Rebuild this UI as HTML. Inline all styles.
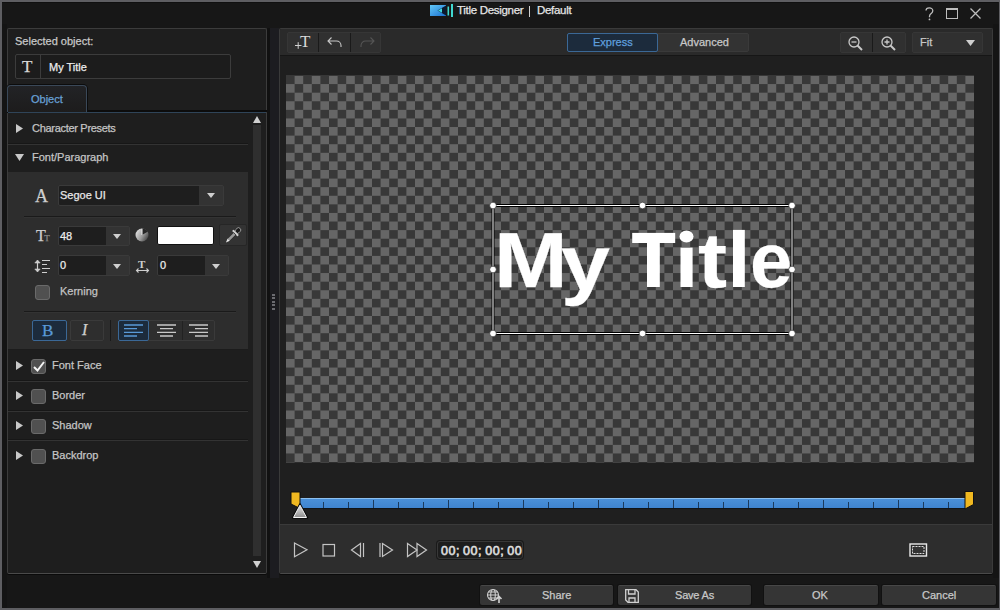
<!DOCTYPE html>
<html><head><meta charset="utf-8">
<style>
*{box-sizing:border-box;margin:0;padding:0}
html,body{width:1000px;height:610px;overflow:hidden}
body{position:relative;background:#171717;font-family:"Liberation Sans",sans-serif;font-size:11px;color:#c4c4c4}
.a{position:absolute}
.t{position:absolute;white-space:nowrap;line-height:1;-webkit-text-stroke:0.25px currentColor}
svg{position:absolute;overflow:visible}
</style></head><body>
<!-- window border -->
<div class="a" style="left:0;top:0;width:1000px;height:610px;border:2px solid #5e5e62;border-right-width:1px"></div>
<div class="a" style="left:2px;top:2px;width:996px;height:1px;background:#101010"></div>
<div class="a" style="left:993px;top:24px;width:6px;height:554px;background:#141414"></div>

<!-- title bar -->
<svg style="left:430px;top:4px" width="24" height="14">
  <defs><linearGradient id="lg" x1="0" y1="0" x2="1" y2="1"><stop offset="0" stop-color="#62c8f8"/><stop offset="1" stop-color="#1a70d0"/></linearGradient></defs>
  <rect x="0" y="1" width="16" height="11" fill="url(#lg)"/>
  <polygon points="16,1.5 7.5,6.5 16,11.5" fill="#0a1a30"/>
  <polygon points="12,4.2 8,6.5 12,8.8" fill="#40d8e0"/>
  <rect x="17.5" y="2.5" width="1.6" height="9" fill="#40d8d0"/>
  <rect x="21" y="0" width="2" height="13" fill="#40d8d0"/>
</svg>
<div class="t" style="left:457px;top:5px;font-size:11.5px;letter-spacing:-0.3px;color:#e6e6e6">Title Designer</div><div class="a" style="left:529px;top:6px;width:1px;height:11px;background:#d0d0d0"></div><div class="t" style="left:537px;top:5px;font-size:11.5px;letter-spacing:-0.3px;color:#e6e6e6">Default</div>
<svg style="left:925px;top:7px" width="10" height="14"><path d="M1 3.5C1 1.8 2.6 0.8 4.3 0.8C6.3 0.8 7.8 2 7.8 3.8C7.8 5.3 6.8 6 5.8 6.8C4.9 7.5 4.5 8 4.5 9.5V10.3" stroke="#bdbdbd" stroke-width="1.3" fill="none"/><circle cx="4.5" cy="12.4" r="0.9" fill="#bdbdbd"/></svg>
<div class="a" style="left:946px;top:8px;width:12px;height:11px;border:1.5px solid #bdbdbd;border-top-width:2px"></div>
<svg style="left:970px;top:8px" width="11" height="11"><path d="M0.5 0.5L10.5 10.5M10.5 0.5L0.5 10.5" stroke="#bdbdbd" stroke-width="1.3"/></svg>

<!-- LEFT PANEL -->
<div class="a" style="left:7px;top:28px;width:260px;height:546px;background:#1e1e1e;border:1px solid #3c3c3c;border-radius:2px;border-bottom-color:#4a4a4a;box-shadow:0 1px 0 #0a0a0a"></div>

<div class="t" style="left:15px;top:36px;color:#c8c8c8">Selected object:</div>
<div class="a" style="left:15px;top:54px;width:216px;height:25px;border:1px solid #3c3c3c;border-radius:2px;background:#1c1c1c"></div>
<div class="a" style="left:40px;top:55px;width:1px;height:23px;background:#3c3c3c"></div>
<div class="t" style="left:22px;top:58px;font-family:'Liberation Serif',serif;font-size:17px;color:#d8d8d8">T</div>
<div class="t" style="left:49px;top:62px;color:#ececec">My Title</div>
<!-- tab -->
<div class="a" style="left:7px;top:85px;width:80px;height:27px;border:1px solid #3a4858;border-bottom:none;border-radius:4px 4px 0 0;background:linear-gradient(#222326,#1d1c1c);box-shadow:0 0 0 1px #0c0c0c"></div>
<div class="t" style="left:31px;top:94px;font-size:11px;color:#68a0d6">Object</div>
<div class="a" style="left:87px;top:110px;width:180px;height:2px;background:#0c0c0c"></div>
<div class="a" style="left:8px;top:112px;width:258px;height:1px;background:#2f4458"></div>
<!-- rows -->
<div class="a" style="left:8px;top:143px;width:240px;height:1px;background:#171717"></div><div class="a" style="left:8px;top:144px;width:240px;height:1px;background:#333"></div>
<svg style="left:16px;top:124px" width="7" height="9"><polygon points="0,0 7,4.5 0,9" fill="#c8c8c8"/></svg>
<div class="t" style="left:32px;top:123px;color:#c4c4c4;letter-spacing:-0.3px">Character Presets</div>
<svg style="left:15px;top:154px" width="9" height="7"><polygon points="0,0 9,0 4.5,7" fill="#c8c8c8"/></svg>
<div class="t" style="left:32px;top:152px;color:#c4c4c4">Font/Paragraph</div>
<!-- section -->
<div class="a" style="left:8px;top:172px;width:240px;height:178px;background:#2d2d2d"></div>
<div class="a" style="left:8px;top:349px;width:240px;height:1px;background:#1c1c1c"></div>
<div class="t" style="left:35px;top:187px;font-family:'Liberation Serif',serif;font-size:18px;color:#cfcfcf">A</div>
<div class="a" style="left:58px;top:185px;width:166px;height:21px;border:1px solid #3a3a3a;border-radius:2px;background:#1e1e1e"></div>
<div class="a" style="left:199px;top:186px;width:24px;height:19px;background:#333"></div>
<svg style="left:207px;top:193px" width="8" height="5"><polygon points="0,0 8,0 4,5" fill="#cfcfcf"/></svg>
<div class="t" style="left:60px;top:190px;color:#e6e6e6">Segoe UI</div>
<div class="a" style="left:24px;top:216px;width:212px;height:1px;background:#1a1a1a"></div>
<div class="a" style="left:24px;top:217px;width:212px;height:1px;background:#333"></div>

<div class="t" style="left:36px;top:228px;font-family:'Liberation Serif',serif;font-size:16px;color:#cfcfcf">T<span style="font-size:9px;color:#8c8c8c;margin-left:-1.5px">T</span></div>
<div class="a" style="left:58px;top:226px;width:72px;height:20px;border:1px solid #3a3a3a;border-radius:2px;background:#1e1e1e"></div>
<div class="a" style="left:106px;top:227px;width:23px;height:18px;background:#333"></div>
<svg style="left:113px;top:234px" width="8" height="5"><polygon points="0,0 8,0 4,5" fill="#cfcfcf"/></svg>
<div class="t" style="left:60px;top:231px;color:#ececec">48</div>
<svg style="left:135px;top:228px" width="14" height="14"><defs><linearGradient id="og" x1="0" y1="0.2" x2="1" y2="0.8"><stop offset="0" stop-color="#e6e6e6"/><stop offset="0.55" stop-color="#9a9a9a"/><stop offset="1" stop-color="#3c3c3c"/></linearGradient></defs><circle cx="7" cy="7" r="6.5" fill="url(#og)"/><path d="M7 7V0.5A6.5 6.5 0 0 1 12.6 3.75Z" fill="#262626"/><path d="M7 7V0.8" stroke="#f0f0f0" stroke-width="1"/></svg>
<div class="a" style="left:157px;top:226px;width:57px;height:19px;border:1px solid #111;border-radius:2px;background:#fff"></div>
<div class="a" style="left:219px;top:224px;width:28px;height:22px;border:1px solid #262626;border-radius:2px;background:#333"></div>
<svg style="left:224px;top:226px" width="18" height="19"><g transform="rotate(45 9 9.5)">
<rect x="6.8" y="-0.5" width="4.4" height="6" rx="2" fill="#1a1a1a" stroke="#b0b0b0" stroke-width="0.8"/>
<rect x="5.2" y="5" width="7.6" height="2" rx="0.6" fill="#d0d0d0"/>
<rect x="7.4" y="7" width="3.2" height="8.5" fill="#9a9a9a" stroke="#1a1a1a" stroke-width="0.6"/>
<polygon points="7.4,15.5 10.6,15.5 9,19.5" fill="#e8e8e8"/>
</g></svg>

<svg style="left:34px;top:259px" width="17" height="15"><path d="M3.5 1.5V12.5" stroke="#cfcfcf" stroke-width="1.2"/><path d="M0.8 4L3.5 1L6.2 4Z M0.8 10L3.5 13L6.2 10Z" fill="#cfcfcf" stroke="#cfcfcf" stroke-width="0.6"/><path d="M8 1.5H16M8 5.5H13M8 9.5H16M8 13.5H13" stroke="#cfcfcf" stroke-width="1.1"/></svg>
<div class="a" style="left:58px;top:255px;width:72px;height:21px;border:1px solid #3a3a3a;border-radius:2px;background:#1e1e1e"></div>
<div class="a" style="left:106px;top:256px;width:23px;height:19px;background:#333"></div>
<svg style="left:113px;top:264px" width="8" height="5"><polygon points="0,0 8,0 4,5" fill="#cfcfcf"/></svg>
<div class="t" style="left:60px;top:260px;color:#ececec">0</div>
<svg style="left:135px;top:259px" width="15" height="14"><text x="3" y="9" font-family="Liberation Serif" font-weight="bold" font-size="11" fill="#cfcfcf">T</text><path d="M1.5 11.5H13.5M3.5 9.5L1.5 11.5L3.5 13.5M11.5 9.5L13.5 11.5L11.5 13.5" stroke="#cfcfcf" stroke-width="1.1" fill="none"/></svg>
<div class="a" style="left:157px;top:255px;width:72px;height:21px;border:1px solid #3a3a3a;border-radius:2px;background:#1e1e1e"></div>
<div class="a" style="left:205px;top:256px;width:23px;height:19px;background:#333"></div>
<svg style="left:212px;top:264px" width="8" height="5"><polygon points="0,0 8,0 4,5" fill="#cfcfcf"/></svg>
<div class="t" style="left:160px;top:260px;color:#ececec">0</div>

<div class="a" style="left:35px;top:285px;width:15px;height:15px;border:1px solid #6a6a6a;border-radius:3px;background:#505050"></div>
<div class="t" style="left:60px;top:286px;color:#c4c4c4">Kerning</div>
<div class="a" style="left:24px;top:311px;width:212px;height:1px;background:#1a1a1a"></div>
<div class="a" style="left:24px;top:312px;width:212px;height:1px;background:#333"></div>

<div class="a" style="left:32px;top:320px;width:35px;height:21px;border:1px solid #3b6896;border-radius:2px;background:#1c2b3c"></div>
<div class="t" style="left:42px;top:322px;font-family:'Liberation Serif',serif;font-size:17px;color:#5a9ad8">B</div>
<div class="a" style="left:70px;top:320px;width:34px;height:21px;border:1px solid #3a3a3a;border-radius:2px;background:#2e2e2e"></div>
<div class="t" style="left:82px;top:322px;font-family:'Liberation Serif',serif;font-style:italic;font-size:16px;color:#cfcfcf">I</div>
<div class="a" style="left:110px;top:320px;width:1px;height:21px;background:#1a1a1a"></div>
<div class="a" style="left:118px;top:320px;width:97px;height:21px;border:1px solid #3a3a3a;border-radius:2px;background:#2e2e2e"></div>
<div class="a" style="left:118px;top:320px;width:31px;height:21px;border:1px solid #3b6896;border-radius:2px;background:#1c2b3c"></div>
<div class="a" style="left:182px;top:321px;width:1px;height:19px;background:#222"></div>
<svg style="left:124px;top:324px" width="90" height="13">
 <path d="M0 1H19M0 4.7H13M0 8.3H19M0 12H13" stroke="#5a9ad8" stroke-width="1.3"/>
 <path d="M33 1H52M36 4.7H49M33 8.3H52M36 12H49" stroke="#c8c8c8" stroke-width="1.3"/>
 <path d="M65 1H84M71 4.7H84M65 8.3H84M71 12H84" stroke="#c8c8c8" stroke-width="1.3"/>
</svg>

<!-- lower rows -->
<div class="a" style="left:8px;top:380px;width:240px;height:1px;background:#171717"></div><div class="a" style="left:8px;top:381px;width:240px;height:1px;background:#333"></div>
<div class="a" style="left:8px;top:410px;width:240px;height:1px;background:#171717"></div><div class="a" style="left:8px;top:411px;width:240px;height:1px;background:#333"></div>
<div class="a" style="left:8px;top:439px;width:240px;height:1px;background:#171717"></div><div class="a" style="left:8px;top:440px;width:240px;height:1px;background:#333"></div>
<svg style="left:16px;top:361px" width="7" height="9"><polygon points="0,0 7,4.5 0,9" fill="#c8c8c8"/></svg>
<div class="a" style="left:31px;top:359px;width:15px;height:15px;border:1px solid #6a6a6a;border-radius:3px;background:#505050"></div>
<svg style="left:33px;top:361px" width="12" height="11"><path d="M1 6L4.5 9.5L11 1" stroke="#f4f4f4" stroke-width="2" fill="none"/></svg>
<div class="t" style="left:52px;top:360px;color:#c4c4c4">Font Face</div>
<svg style="left:16px;top:391px" width="7" height="9"><polygon points="0,0 7,4.5 0,9" fill="#c8c8c8"/></svg>
<div class="a" style="left:31px;top:389px;width:15px;height:15px;border:1px solid #6a6a6a;border-radius:3px;background:#505050"></div>
<div class="t" style="left:52px;top:390px;color:#c4c4c4">Border</div>
<svg style="left:16px;top:421px" width="7" height="9"><polygon points="0,0 7,4.5 0,9" fill="#c8c8c8"/></svg>
<div class="a" style="left:31px;top:419px;width:15px;height:15px;border:1px solid #6a6a6a;border-radius:3px;background:#505050"></div>
<div class="t" style="left:52px;top:420px;color:#c4c4c4">Shadow</div>
<svg style="left:16px;top:451px" width="7" height="9"><polygon points="0,0 7,4.5 0,9" fill="#c8c8c8"/></svg>
<div class="a" style="left:31px;top:449px;width:15px;height:15px;border:1px solid #6a6a6a;border-radius:3px;background:#505050"></div>
<div class="t" style="left:52px;top:450px;color:#c4c4c4">Backdrop</div>

<!-- scrollbar -->
<svg style="left:253px;top:116px" width="8" height="7"><polygon points="4,0 8,7 0,7" fill="#d0d0d0"/></svg>
<div class="a" style="left:253px;top:125px;width:8px;height:431px;background:#2f2f2f"></div>
<svg style="left:253px;top:561px" width="8" height="7"><polygon points="0,0 8,0 4,7" fill="#d0d0d0"/></svg>
<!-- splitter -->
<div class="a" style="left:267px;top:28px;width:3px;height:550px;background:#111"></div>
<div class="a" style="left:2px;top:24px;width:5px;height:584px;background:#141414"></div>
<div class="a" style="left:270px;top:28px;width:9px;height:550px;background:#1c1c20"></div>
<div class="a" style="left:272px;top:294px;width:3px;height:17px;background:repeating-linear-gradient(#6b6b70 0 2px,transparent 2px 3.5px)"></div>

<!-- RIGHT PANEL -->
<div class="a" style="left:279px;top:28px;width:714px;height:546px;background:#1f1f1f;border:1px solid #3a3a3a;border-radius:2px;overflow:hidden;border-bottom-color:#4a4a4a;box-shadow:0 1px 0 #0a0a0a">
  <div class="a" style="left:0;top:0;width:712px;height:27px;background:#2a2a2a;border-bottom:1px solid #161616"></div>
  <div class="a" style="left:0;top:495px;width:712px;height:50px;background:#2d2d2d;border-top:1px solid #3a3a3a"></div>
</div>
<!-- toolbar buttons -->
<div class="a" style="left:287px;top:32px;width:94px;height:21px;border:1px solid #363636;border-radius:2px;background:#303030"></div>
<div class="a" style="left:318px;top:33px;width:1px;height:19px;background:#1a1a1a"></div>
<div class="a" style="left:350px;top:33px;width:1px;height:19px;background:#1a1a1a"></div>
<svg style="left:294px;top:35px" width="20" height="15"><path d="M1 10.5H7.5M4.2 7.2V13.8" stroke="#d0d0d0" stroke-width="1"/><text x="6" y="12" font-family="Liberation Serif" font-size="17" fill="#d8d8d8">T</text></svg>
<svg style="left:327px;top:37px" width="16" height="11"><path d="M1 4H9.5A4.5 4.5 0 0 1 14 8.5V10M4.5 0.5L1 4L4.5 7.5" stroke="#c8c8c8" stroke-width="1.1" fill="none"/></svg>
<svg style="left:359px;top:37px" width="16" height="11"><path d="M15 4H6.5A4.5 4.5 0 0 0 2 8.5V10M11.5 0.5L15 4L11.5 7.5" stroke="#555" stroke-width="1.1" fill="none"/></svg>

<div class="a" style="left:567px;top:33px;width:182px;height:19px;border:1px solid #3a3a3a;border-radius:2px;background:#333"></div>
<div class="a" style="left:567px;top:33px;width:91px;height:19px;border:1px solid #3b6896;border-radius:2px;background:#1c2b3c"></div>
<div class="t" style="left:593px;top:37px;color:#5f9fdc">Express</div>
<div class="t" style="left:680px;top:37px;color:#c8c8c8">Advanced</div>

<div class="a" style="left:840px;top:32px;width:66px;height:21px;border:1px solid #363636;border-radius:2px;background:#303030"></div>
<div class="a" style="left:872px;top:33px;width:1px;height:19px;background:#1a1a1a"></div>
<svg style="left:848px;top:36px" width="18" height="15"><circle cx="6" cy="6" r="5" stroke="#c8c8c8" stroke-width="1.3" fill="none"/><path d="M3.5 6H8.5" stroke="#c8c8c8" stroke-width="1.3"/><path d="M9.5 9.5L14 14" stroke="#c8c8c8" stroke-width="2"/></svg>
<svg style="left:881px;top:36px" width="18" height="15"><circle cx="6" cy="6" r="5" stroke="#c8c8c8" stroke-width="1.3" fill="none"/><path d="M3.5 6H8.5M6 3.5V8.5" stroke="#c8c8c8" stroke-width="1.3"/><path d="M9.5 9.5L14 14" stroke="#c8c8c8" stroke-width="2"/></svg>
<div class="a" style="left:912px;top:32px;width:71px;height:21px;border:1px solid #363636;border-radius:2px;background:#303030"></div>
<div class="t" style="left:920px;top:37px;color:#c8c8c8">Fit</div>
<svg style="left:966px;top:40px" width="9" height="6"><polygon points="0,0 9,0 4.5,6" fill="#cfcfcf"/></svg>

<!-- canvas -->
<svg style="left:286px;top:75px" width="688" height="388">
 <defs><pattern id="ck" x="0" y="0.5" width="17.2" height="17.18" patternUnits="userSpaceOnUse">
  <rect width="17.2" height="17.18" fill="#666"/><rect width="8.6" height="8.59" fill="#383838"/><rect x="8.6" y="8.59" width="8.6" height="8.59" fill="#383838"/>
 </pattern></defs>
 <rect y="0.5" width="688" height="387" fill="url(#ck)"/>
</svg>
<div class="t" style="left:494.2px;top:221px;font-size:78.5px;font-weight:bold;color:#fff;transform:scaleX(1.127);transform-origin:0 0">M</div>
<div class="t" style="left:560.9px;top:224px;font-size:78.5px;font-weight:bold;color:#fff;transform:scaleX(1.12);transform-origin:0 0">y</div>
<svg style="left:600px;top:220px" width="200" height="70"><g fill="#fff">
<rect x="32.2" y="12.9" width="43" height="10.1"/><rect x="47" y="22" width="12.8" height="45"/>
<rect x="80.5" y="27.6" width="12.1" height="39.4"/><ellipse cx="86.5" cy="16.5" rx="7" ry="6"/>
<rect x="133" y="9.9" width="11.8" height="57.1"/>
</g></svg>
<div class="t" style="left:697.9px;top:221px;font-size:78.5px;font-weight:bold;color:#fff;transform:scaleX(1.11);transform-origin:0 0">t</div>
<div class="t" style="left:750.3px;top:221px;font-size:78.5px;font-weight:bold;color:#fff;transform:scaleX(0.97);transform-origin:0 0">e</div>
<svg style="left:486px;top:198px" width="314" height="142">
 <rect x="7" y="7.5" width="299" height="128" fill="none" stroke="#000" stroke-width="3"/>
 <rect x="7" y="7.5" width="299" height="128" fill="none" stroke="#fff" stroke-width="1"/>
 <g fill="#fff" stroke="#222" stroke-width="0.6">
 <circle cx="7" cy="7.5" r="3.3"/><circle cx="156.5" cy="7.5" r="3.3"/><circle cx="306" cy="7.5" r="3.3"/>
 <circle cx="7" cy="71.5" r="3.3"/><circle cx="306" cy="71.5" r="3.3"/>
 <circle cx="7" cy="135.5" r="3.3"/><circle cx="156.5" cy="135.5" r="3.3"/><circle cx="306" cy="135.5" r="3.3"/>
 </g>
</svg>

<!-- timeline -->
<div class="a" style="left:299px;top:498px;width:667px;height:11px;background:linear-gradient(#8cc0f0 0,#8cc0f0 1px,#4a90d9 1px,#3f84cf 100%);border-bottom:1px solid #101418"></div>
<svg style="left:290px;top:490px" width="690" height="30" id="ticks"><path d="M33.5 12V18" stroke="#1c3a5c" stroke-width="1"/><path d="M58.5 12V18" stroke="#1c3a5c" stroke-width="1"/><path d="M83.5 10V18" stroke="#1c3a5c" stroke-width="1"/><path d="M108.5 12V18" stroke="#1c3a5c" stroke-width="1"/><path d="M133.5 12V18" stroke="#1c3a5c" stroke-width="1"/><path d="M158.5 10V18" stroke="#1c3a5c" stroke-width="1"/><path d="M183.5 12V18" stroke="#1c3a5c" stroke-width="1"/><path d="M208.5 12V18" stroke="#1c3a5c" stroke-width="1"/><path d="M233.5 10V18" stroke="#1c3a5c" stroke-width="1"/><path d="M258.5 12V18" stroke="#1c3a5c" stroke-width="1"/><path d="M283.5 12V18" stroke="#1c3a5c" stroke-width="1"/><path d="M308.5 10V18" stroke="#1c3a5c" stroke-width="1"/><path d="M333.5 12V18" stroke="#1c3a5c" stroke-width="1"/><path d="M358.5 12V18" stroke="#1c3a5c" stroke-width="1"/><path d="M383.5 10V18" stroke="#1c3a5c" stroke-width="1"/><path d="M408.5 12V18" stroke="#1c3a5c" stroke-width="1"/><path d="M433.5 12V18" stroke="#1c3a5c" stroke-width="1"/><path d="M458.5 10V18" stroke="#1c3a5c" stroke-width="1"/><path d="M483.5 12V18" stroke="#1c3a5c" stroke-width="1"/><path d="M508.5 12V18" stroke="#1c3a5c" stroke-width="1"/><path d="M533.5 10V18" stroke="#1c3a5c" stroke-width="1"/><path d="M558.5 12V18" stroke="#1c3a5c" stroke-width="1"/><path d="M583.5 12V18" stroke="#1c3a5c" stroke-width="1"/><path d="M608.5 10V18" stroke="#1c3a5c" stroke-width="1"/><path d="M633.5 12V18" stroke="#1c3a5c" stroke-width="1"/><path d="M658.5 12V18" stroke="#1c3a5c" stroke-width="1"/></svg>
<svg style="left:290px;top:491px" width="12" height="18"><path d="M1 1H10V13L8 16.5L1 13Z" fill="#f0b820" stroke="#111" stroke-width="1"/></svg>
<svg style="left:964px;top:491px" width="11" height="19"><path d="M1 0.5H9.5V13.5L1 18Z" fill="#f0b820" stroke="#111" stroke-width="1"/></svg>
<svg style="left:291px;top:502px" width="18" height="18"><defs><linearGradient id="pg" x1="0" y1="0" x2="0" y2="1"><stop offset="0" stop-color="#e8e8e8"/><stop offset="1" stop-color="#8c8c8c"/></linearGradient></defs><polygon points="9,2 16.5,16 1.5,16" fill="#0a0a0a" stroke="#0a0a0a" stroke-width="1.6" stroke-linejoin="round"/><polygon points="9,3.2 15.5,15.5 2.5,15.5" fill="url(#pg)" stroke="#f4f4f4" stroke-width="1"/></svg>

<!-- playback -->
<svg style="left:293px;top:542px" width="140" height="17" fill="none" stroke="#c4c4c4" stroke-width="1.2">
 <polygon points="1.5,1 14,7.7 1.5,14.8"/>
 <rect x="30" y="2.5" width="11.5" height="11.5"/>
 <polygon points="67.5,1.5 58.5,8 67.5,14.5"/><path d="M70.5 1V15"/>
 <path d="M87 1V15"/><polygon points="89.5,1.5 99.5,8 89.5,14.5"/>
 <polygon points="114.5,1.5 124,8 114.5,14.5"/><polygon points="124,1.5 133.5,8 124,14.5"/>
</svg>
<div class="a" style="left:437px;top:541px;width:86px;height:18px;border:1px solid #383838;border-radius:3px;background:#1d1d1d;box-shadow:0 0 0 1px #1a1a1a"></div>
<div class="t" style="left:441px;top:545px;font-size:12.5px;color:#e0e0e0;letter-spacing:0.55px;-webkit-text-stroke:0.55px #e0e0e0">00;&thinsp;00;&thinsp;00;&thinsp;00</div>
<svg style="left:909px;top:543px" width="19" height="15"><rect x="1" y="1" width="16.5" height="12" fill="#2a2a2a" stroke="#e8e8e8" stroke-width="1.4"/><rect x="3.5" y="3.5" width="11.5" height="7" fill="#333" stroke="#dcdcdc" stroke-width="1" stroke-dasharray="2 1"/></svg>

<!-- bottom buttons -->
<div class="a" style="left:480px;top:585px;width:133px;height:20px;border-top:1px solid #474747;border-radius:2px;background:#353535;box-shadow:0 0 0 1px #111"></div>
<div class="a" style="left:618px;top:585px;width:133px;height:20px;border-top:1px solid #474747;border-radius:2px;background:#353535;box-shadow:0 0 0 1px #111"></div>
<div class="a" style="left:764px;top:585px;width:114px;height:20px;border-top:1px solid #474747;border-radius:2px;background:#353535;box-shadow:0 0 0 1px #111"></div>
<div class="a" style="left:882px;top:585px;width:114px;height:20px;border-top:1px solid #474747;border-radius:2px;background:#353535;box-shadow:0 0 0 1px #111"></div>
<div class="t" style="left:542px;top:590px;color:#c8c8c8">Share</div>
<div class="t" style="left:675px;top:590px;color:#c8c8c8;letter-spacing:-0.2px">Save As</div>
<div class="t" style="left:812px;top:590px;color:#c8c8c8">OK</div>
<div class="t" style="left:922px;top:590px;color:#c8c8c8">Cancel</div>
<svg style="left:486px;top:588px" width="18" height="16" fill="none" stroke="#d0d0d0" stroke-width="1.1"><circle cx="7" cy="7" r="5.5"/><ellipse cx="7" cy="7" rx="2.3" ry="5.5"/><path d="M1.5 7H12.5M2.5 4H11.5M2.5 10H11.5"/><path d="M13 15V8.5M10.5 11L13 8.5L15.5 11" stroke-width="1.6"/></svg>
<svg style="left:625px;top:589px" width="14" height="14" fill="none" stroke="#d0d0d0" stroke-width="1.3"><path d="M0.7 0.7H11L13.3 3V13.3H3L0.7 11Z"/><path d="M3.5 0.7V5H10V0.7M4 13.3V9H10V13.3"/></svg>
</body></html>
